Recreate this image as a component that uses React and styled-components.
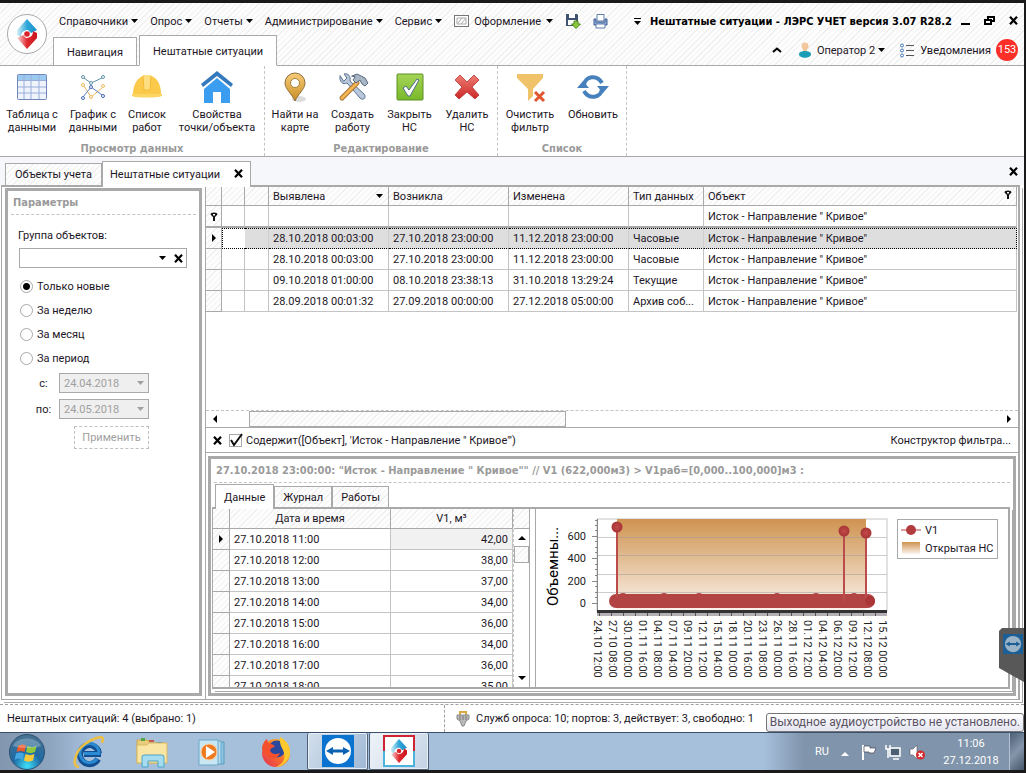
import React, { Fragment } from "react";
import styled, { createGlobalStyle, css } from "styled-components";

const GlobalStyle = createGlobalStyle`
  * {
    box-sizing: border-box;
  }
  body {
    margin: 0;
    font-family: Roboto, "Noto Sans", sans-serif;
    font-size: 11px;
    line-height: 13px;
    color: #1c1626;
    background: #1a1a1a;
  }
  button, input, select {
    font: inherit;
    color: inherit;
    margin: 0;
    padding: 0;
    border: 0;
    background: none;
  }
  ul {
    margin: 0;
    padding: 0;
    list-style: none;
  }
`;

const line = "#a9a9a9";
const boldFont = css`
  font-family: "DejaVu Sans Condensed", "Noto Sans", sans-serif;
  font-weight: bold;
`;
const hatch = css`
  background: repeating-linear-gradient(135deg, #fdfdfd 0 3px, #f0f0f0 3px 4px);
`;
const frameShadow = css`
  box-shadow: 2px 2px 0 #fff, 3px 3px 0 ${line};
`;

const Desktop = styled.div`
  position: relative;
  display: flex;
  flex-direction: column;
  height: 100vh;
  min-width: 960px;
  min-height: 700px;
  padding: 3px 2px 3px 0;
  background: #1a1a1a;
`;

/* шапка окна */
const Head = styled.header`
  ${hatch}
  display: flex;
  height: 63px;
  flex-shrink: 0;
  padding-left: 7px;
  border-bottom: 1px solid ${line};
`;

const AppButton = styled.button`
  display: flex;
  align-items: center;
  justify-content: center;
  width: 40px;
  height: 40px;
  margin-top: 11px;
  border: 1px solid ${line};
  border-radius: 50%;
  background: #fff;
  flex-shrink: 0;
`;

const HeadRows = styled.div`
  display: flex;
  flex: 1;
  flex-direction: column;
  justify-content: space-between;
  padding-left: 6px;
  min-width: 0;
`;

const HeadRow = styled.div`
  display: flex;
  justify-content: space-between;
  height: 30px;
  align-items: ${p => p.$end ? "flex-end" : "center"};
  padding-right: 6px;
`;

const Menu = styled.nav`
  display: flex;
  align-items: center;
  gap: 12px;
  padding: 6px 0 0 6px;
`;

const MenuItem = styled.button`
  display: flex;
  align-items: center;
  gap: ${p => p.$icon ? 5 : 3}px;
  white-space: nowrap;
`;

const WindowTitle = styled.div`
  ${boldFont}
  display: flex;
  align-items: center;
  gap: 9px;
  padding-top: 6px;
  color: #000;
  white-space: nowrap;
`;

const WindowButtons = styled.div`
  display: flex;
  align-items: center;
  gap: 14px;
`;

const RibbonTabs = styled.div`
  display: flex;
  align-items: flex-end;
  gap: 2px;
  margin-bottom: -1px;
`;

const RibbonTab = styled.button`
  height: ${p => p.$active ? 31 : 29}px;
  padding: 2px 13px 0;
  border: 1px solid ${line};
  border-bottom-color: ${p => p.$active ? "#fff" : line};
  background: #fff;
`;

const UserBar = styled.div`
  display: flex;
  align-items: center;
  align-self: center;
  gap: 14px;
`;

const Badge = styled.span`
  width: 22px;
  height: 22px;
  border-radius: 50%;
  background: #fb2f28;
  color: #fff;
  line-height: 22px;
  text-align: center;
`;

/* лента */
const RibbonBar = styled.div`
  display: flex;
  height: 91px;
  flex-shrink: 0;
  background: #fff;
  border-bottom: 1px solid ${line};
`;

const RibbonGroup = styled.section`
  display: flex;
  flex-direction: column;
  justify-content: space-between;
  padding: 5px 1px 1px;
  border-right: 1px dashed #c4c4c4;
`;

const RibbonItems = styled.div`
  display: flex;
`;

const GroupTitle = styled.div`
  ${boldFont}
  color: #9a9a9a;
  text-align: center;
`;

const RibbonButton = styled.button`
  display: flex;
  flex-direction: column;
  align-items: center;
  gap: 5px;
  width: ${p => p.$width}px;
  white-space: pre-line;
`;

/* вкладки документов */
const DocTabs = styled.div`
  display: flex;
  align-items: flex-end;
  height: 28px;
  flex-shrink: 0;
  padding: 0 6px 0 5px;
  background: #f6f7fa;
  .space {
    flex: 1;
  }
  .close-all {
    align-self: center;
    display: flex;
  }
`;

const DocTab = styled.div`
  ${p => p.$active ? "background: #fff;" : hatch}
  position: relative;
  z-index: ${p => p.$active ? 1 : 0};
  display: flex;
  align-items: center;
  gap: 14px;
  height: ${p => p.$active ? 26 : 22}px;
  margin-bottom: ${p => p.$active ? -2 : 0}px;
  padding: 0 ${p => p.$active ? 7 : 9}px;
  border: 1px solid ${line};
  border-bottom: 0;
  white-space: nowrap;
`;

const Frame = styled.main`
  ${frameShadow}
  display: flex;
  flex: 1;
  min-height: 0;
  margin: 0 4px 4px 1px;
  border: 1px solid ${line};
  border-top-width: 2px;
  border-right-width: 2px;
  background: #fff;
`;

const Backdrop = styled.div`
  display: flex;
  flex-direction: column;
  flex: 1;
  min-height: 0;
  background: #fff;
`;

/* параметры */
const SidePanel = styled.aside`
  width: 197px;
  flex-shrink: 0;
  margin: 1px 3px 3px;
  border: 3px solid ${line};
`;

const PanelTitle = styled.h2`
  ${boldFont}
  display: flex;
  align-items: center;
  height: ${p => p.$height}px;
  margin: 0 3px;
  padding: 0 2px;
  border-bottom: 1px dashed #c4c4c4;
  color: #9a9a9a;
  font-size: 11px;
  white-space: nowrap;
  overflow: hidden;
`;

const Params = styled.form`
  display: flex;
  flex-direction: column;
  padding: 14px 12px 0 10px;
`;

const Combo = styled.div`
  display: flex;
  align-items: center;
  gap: 8px;
  height: 20px;
  margin: 6px 0 6px 1px;
  padding-right: 3px;
  border: 1px solid ${line};
  select {
    flex: 1;
    appearance: none;
    align-self: stretch;
  }
  button {
    display: flex;
  }
`;

const Radio = styled.label`
  display: flex;
  align-items: center;
  gap: 4px;
  height: 24px;
  padding-left: 2px;
  input {
    width: 13px;
    height: 13px;
    appearance: none;
    border: 1px solid ${line};
    border-radius: 50%;
    background: #fff;
  }
  input:checked {
    background: radial-gradient(circle, #000 0 3px, #fff 4px);
  }
`;

const DateRow = styled.div`
  display: grid;
  grid-template-columns: 23px 90px;
  justify-content: start;
  align-items: center;
  gap: 4px;
  height: 26px;
  padding-left: 14px;
  label {
    justify-self: center;
  }
`;

const DateBox = styled.div`
  display: flex;
  align-items: center;
  height: 20px;
  padding: 0 4px;
  border: 1px solid ${line};
  background: #efefef;
  color: #a0a0a0;
  select {
    flex: 1;
    appearance: none;
    opacity: 1;
  }
`;

const ApplyButton = styled.button`
  align-self: flex-start;
  width: 75px;
  height: 23px;
  margin: 4px 0 0 56px;
  border: 1px dashed #c0c0c0;
  color: #a0a0a0;
`;

/* основная таблица */
const Workspace = styled.div`
  display: flex;
  flex: 1;
  flex-direction: column;
  min-width: 0;
  border-left: 1px solid ${line};
`;

const TableArea = styled.div`
  flex: 1;
  min-height: 0;
  padding-right: 1px;
  overflow: hidden;
`;

const Table = styled.table`
  width: 100%;
  table-layout: fixed;
  border-collapse: separate;
  border-spacing: 0;
  th, td {
    height: 21px;
    padding: 0 4px;
    border-right: 1px solid #c4c4c4;
    border-bottom: 1px solid #c4c4c4;
    font-weight: normal;
    text-align: left;
    white-space: nowrap;
    overflow: hidden;
    text-overflow: ellipsis;
  }
  thead th, tbody th {
    ${hatch}
    border-color: ${line};
  }
  tbody th, thead th:empty {
    padding: 0;
  }
  tbody th svg {
    display: block;
    margin: 0 auto;
  }
  thead th {
    height: ${p => p.$head}px;
    text-align: ${p => p.$center ? "center" : "left"};
  }
`;

const ValueCell = styled.td`
  && {
    background: ${p => p.$focused ? "#f1f1f1" : "#fff"};
    text-align: right;
  }
`;

const HeadCell = styled.div`
  display: flex;
  align-items: ${p => p.$top ? "flex-start" : "center"};
  justify-content: space-between;
`;

const FilterRow = styled.tr`
  th, td {
    height: 22px;
    border-bottom: 2px solid ${line};
  }
  input {
    display: block;
    width: 100%;
    outline: 0;
  }
`;

const DataRow = styled.tr`
  ${p => p.$selected && css`
    td {
      background: #dedede;
      border-top: 1px dotted #000;
      border-bottom: 1px dotted #000;
      border-right-color: #cfcfcf;
    }
    th + td {
      background: #fff;
      border-left: 1px dotted #000;
      border-right: 0;
    }
    td:last-child {
      border-right: 1px dotted #000;
    }
  `}
`;

const HScroll = styled.div`
  display: grid;
  grid-template-columns: 43px 317px 1fr;
  height: 18px;
  border-bottom: 1px solid ${line};
  border-top: 1px dashed #c4c4c4;
  align-items: center;
  svg {
    margin: 0 5px;
  }
  svg:last-child {
    justify-self: end;
  }
`;

const Thumb = styled.div`
  ${hatch}
  height: 16px;
  border: 1px solid ${line};
`;

const FilterBar = styled.div`
  display: flex;
  align-items: center;
  height: 25px;
  padding: 0 7px;
  border-bottom: 1px solid ${line};
  white-space: nowrap;
  & > button:first-child {
    display: flex;
    margin-right: 7px;
  }
  & > button:last-child {
    margin-left: auto;
  }
`;

const Check = styled.label`
  display: grid;
  grid-template-columns: 14px auto;
  align-items: center;
  gap: 3px;
  input, svg {
    grid-area: 1 / 1;
  }
  input {
    width: 13px;
    height: 13px;
    appearance: none;
    border: 1px solid ${line};
  }
  svg {
    pointer-events: none;
  }
`;

/* детализация */
const Details = styled.section`
  display: flex;
  flex-direction: column;
  height: 240px;
  flex-shrink: 0;
  margin: 3px 2px 3px 2px;
  border: 3px solid ${line};
`;

const DetailTabs = styled.div`
  display: flex;
  align-items: flex-end;
  height: 24px;
  padding-left: 4px;
`;

const DetailTab = styled.button`
  ${p => p.$active ? "background: #fff;" : hatch}
  position: relative;
  z-index: ${p => p.$active ? 1 : 0};
  height: ${p => p.$active ? 25 : 21}px;
  margin-bottom: ${p => p.$active ? -2 : 0}px;
  padding: 0 8px;
  border: 1px solid ${line};
  border-bottom: 0;
`;

const DetailPage = styled.div`
  ${frameShadow}
  display: flex;
  flex: 1;
  min-height: 0;
  margin: 0 3px 4px 1px;
  border: 2px solid ${line};
  border-left-width: 1px;
`;

const DataPane = styled.div`
  display: flex;
  width: 317px;
  flex-shrink: 0;
  overflow: hidden;
  border-right: 1px solid ${line};
`;

const DataScroll = styled.div`
  flex: 1;
  overflow: hidden;
`;

const VScroll = styled.div`
  display: flex;
  flex-direction: column;
  align-items: center;
  width: 16px;
  border-left: 1px dashed #c4c4c4;
  .corner {
    ${hatch}
    align-self: stretch;
    height: 20px;
    margin-bottom: 5px;
    border-bottom: 1px solid ${line};
  }
  .thumb {
    ${hatch}
    align-self: stretch;
    height: 17px;
    margin-top: 4px;
    border: 1px solid ${line};
  }
  svg:last-child {
    margin: auto 0 5px;
  }
`;

const ChartPane = styled.div`
  display: flex;
  flex: 1;
  align-items: flex-start;
  margin-left: 5px;
  border-left: 1px solid ${line};
  overflow: hidden;
`;

const Legend = styled.ul`
  width: 101px;
  margin-top: 10px;
  padding: 1px 3px;
  border: 1px solid ${line};
  li {
    display: flex;
    align-items: center;
    gap: 4px;
    height: 18px;
    white-space: nowrap;
  }
`;

/* строка состояния и панель задач */
const StatusBar = styled.footer`
  display: flex;
  height: 28px;
  flex-shrink: 0;
  background: #fff;
  border-top: 1px dashed #a0a0a0;
  white-space: nowrap;
`;

const StatusCell = styled.div`
  display: flex;
  align-items: center;
  gap: 6px;
  padding-left: ${p => p.$wide ? 7 : 11}px;
  width: ${p => p.$wide ? "445px" : "auto"};
  border-right: ${p => p.$wide ? "1px dashed #a0a0a0" : "0"};
`;

const Taskbar = styled.div`
  display: flex;
  height: 38px;
  flex-shrink: 0;
  border-top: 1px solid #3a4f6b;
  background: linear-gradient(90deg, #8296ae 0, #8ea5bf 50px, #a6bfdb 90px, #a6bfdb calc(100% - 260px), #8094ab calc(100% - 220px), #8094ab 100%);
`;

const TaskButton = styled.button`
  display: flex;
  align-items: center;
  justify-content: center;
  width: ${p => p.$width}px;
  ${p => p.$open && css`
    border: 1px solid #4c6078;
    border-top: 0;
    border-radius: 2px;
    margin-right: 1px;
    box-shadow: inset 0 0 0 1px #e7eef6;
    background: linear-gradient(120deg, ${p.$current ? "#f0f4f9, #c3d2e4" : "#d3dfec, #9fb8d5"});
  `}
`;

const Tray = styled.div`
  display: flex;
  align-items: center;
  gap: 8px;
  margin-left: auto;
  color: #fff;
  & > button, & > div {
    display: flex;
    align-items: center;
  }
`;

const Clock = styled.div`
  width: 76px;
  line-height: 17px;
  text-align: center;
`;

const ShowDesktop = styled.button`
  width: 15px;
  height: 37px;
  border-left: 1px solid #b4c1d0;
  background: linear-gradient(135deg, #4d5f75, #8496ab 50%, #46566a);
`;

const Hint = styled.div`
  position: absolute;
  right: 2px;
  bottom: 41px;
  height: 19px;
  padding: 0 3px;
  border: 1px solid #767676;
  border-radius: 3px;
  background: linear-gradient(#fff, #e4e5f0);
  color: #5b5364;
  font-size: 12px;
  line-height: 17px;
  white-space: nowrap;
`;

const SideTab = styled.button`
  position: absolute;
  right: 2px;
  bottom: 91px;
  display: flex;
`;

const Caret = ({ color = "#000", size = 7 }) => (
  <svg width={size} height="4" viewBox="0 0 7 4"><path d="M0 0h7L3.500 4z" fill={color} /></svg>
);

const Arrow = ({ dir }) => (
  <svg width="8" height="8" viewBox="0 0 8 8">
    <path d="M2 0v8l4-4z" transform={`rotate(${dir} 4 4)`} fill="#000" />
  </svg>
);

const Cross = () => (
  <svg width="9" height="9" viewBox="0 0 9 9">
    <path d="M1 .8 8 8.200M8 .8 1 8.200" stroke="#000" strokeWidth="2.200" />
  </svg>
);

const Pin = () => (
  <svg width="8" height="9" viewBox="0 0 8 9">
    <path d="M.5 2.500a3.500 2 0 0 1 7 0L5 5v4H3V5z" fill="#111" />
    <path d="M3 2h2v1.500H3z" fill="#fff" />
  </svg>
);

const Logo = ({ size, framed }) => (
  <svg width={size} height={size} viewBox="0 0 32 32">
    <defs>
      <linearGradient id="logoBlue" x1="1" x2="0"><stop offset="0" stopColor="#1b8fc9" /><stop offset=".5" stopColor="#2fa6d8" /><stop offset="1" stopColor="#d8f0f8" /></linearGradient>
      <linearGradient id="logoRed" x1="0" x2="1"><stop offset="0" stopColor="#fbdede" /><stop offset=".5" stopColor="#e02a30" /><stop offset="1" stopColor="#c8161e" /></linearGradient>
    </defs>
    {framed && (
      <Fragment>
        <path d="M1 16V1h30v15" fill="#fff" stroke="#cf2334" strokeWidth="2" />
        <path d="M1 16v15h30V16" fill="#fff" stroke="#4bb4dd" strokeWidth="2" />
      </Fragment>
    )}
    <g transform={framed ? "translate(3.200 3.200) scale(.8)" : undefined}>
      <path d="M16 1 6 12v5l4 2c0-5 3-7 7-7l3 3 6-3z" fill="url(#logoBlue)" />
      <path d="m16 31 10-11v-5l-4-2c0 5-3 7-7 7l-3-3-6 3z" fill="url(#logoRed)" />
      <circle cx="16" cy="16" r="2.800" fill="#d8232b" />
    </g>
  </svg>
);

const SwapMark = ({ size, dim }) => (
  <svg width={size} height={size} viewBox="0 0 32 32">
    <rect width="32" height="32" fill={dim ? "#1c5f96" : "#0a72cf"} />
    <circle cx="16" cy="16" r="13" fill={dim ? "#9ab3c6" : "#fff"} />
    <path d="m4 16 7-4v2.500h10V12l7 4-7 4v-2.500H11V20z" fill={dim ? "#1c5f96" : "#0a62b4"} />
  </svg>
);

const ribbonIcons = {
  table: (
    <g>
      <rect x="1.500" y="3.500" width="29" height="25" rx="1" fill="#eef3fc" stroke="#6f86b8" />
      <path d="M2 4h28v5H2z" fill="#9cc9ef" />
      <path d="M2 9.500h28M2 16h28M2 22h28M8 4v24M15 4v24M23 4v24" stroke="#9aaedb" />
    </g>
  ),
  graph: (
    <g fill="none">
      <path d="m7 7 7 5 11-5" stroke="#5f93a8" />
      <path d="m7 15 7 11 11-9" stroke="#edb95c" />
      <path d="m6 26 8-10 11 8" stroke="#5a7fc0" />
      <g fill="#fff"><circle cx="6" cy="6" r="1.500" stroke="#5f93a8" /><circle cx="14" cy="12" r="1.500" stroke="#5f93a8" /><circle cx="26" cy="6" r="1.500" stroke="#5f93a8" />
        <circle cx="6" cy="14" r="1.500" stroke="#edb95c" /><circle cx="14" cy="26" r="1.500" stroke="#edb95c" /><circle cx="26" cy="15" r="1.500" stroke="#edb95c" />
        <circle cx="6" cy="27" r="1.500" stroke="#4468ae" /><circle cx="14" cy="16" r="1.500" stroke="#4468ae" /><circle cx="26" cy="25" r="1.500" stroke="#4468ae" /></g>
    </g>
  ),
  helmet: (
    <g>
      <path d="M2 23C2 12 8 6 12 5h8c5 1 10 7 10 18z" fill="#fcca4a" />
      <path d="M12 4h8l-1 15h-6z" fill="#fddf82" />
      <path d="M12 5l1 14h6l1-14" fill="none" stroke="#f3bb33" />
      <path d="M1 23h30v2c-3 2-27 2-30 0z" fill="#fdd562" />
    </g>
  ),
  house: (
    <g>
      <path d="m16 0 16 13-2 3L16 5 2 16l-2-3z" fill="#3579bd" />
      <path d="M16 7 29 18v14h-9V21h-8v11H3V18z" fill="#3b9df0" />
    </g>
  ),
  place: (
    <g>
      <ellipse cx="20" cy="28" rx="7" ry="3" fill="#bbb" opacity=".5" />
      <path d="M16 30C13 23 6 18 6 12a10 10 0 0 1 20 0c0 6-7 11-10 18z" fill="url(#gold)" stroke="#8f6c38" />
      <circle cx="16" cy="12" r="4.500" fill="#fff" stroke="#a7803d" />
    </g>
  ),
  tools: (
    <g strokeLinecap="round">
      <path d="M3 5c-1 6 3 9 7 7l13 15c3 3 7 0 4-4L13 10c1-5-2-8-6-7l3 4-3 3z" fill="#b8c7d9" stroke="#5c7390" />
      <path d="m20 12-15 15" stroke="#a8742e" strokeWidth="5" />
      <path d="m20 12-15 15" stroke="#f3b456" strokeWidth="3" />
      <path d="m15 5 5-2 8 4 3 5-3 3-3-2-2-4-4 3-3-3 2-3z" fill="#a9b6c6" stroke="#56677e" />
    </g>
  ),
  done: (
    <g>
      <rect x="3" y="3" width="26" height="26" rx="1" fill="url(#green)" stroke="#5b9122" />
      <path d="m9 17 3-2 3 4 8-11 2 1-9 16h-2z" fill="#fff" stroke="#4a6e83" />
    </g>
  ),
  remove: (
    <path d="m4 9 5-5 7 7 7-7 5 5-7 7 7 8-4 4-8-7-8 7-4-4 7-8z" fill="url(#red)" stroke="#b63330" strokeWidth=".8" />
  ),
  funnel: (
    <g>
      <path d="M3 3h26v4L19 18v7l-5 5V18L3 7z" fill="#f0c26a" />
      <path d="m21 21 9 9M30 21l-9 9" stroke="#e0572f" strokeWidth="3" />
    </g>
  ),
  refresh: (
    <g fill="none" stroke="#4680bd" strokeWidth="4">
      <path d="M7 14c1-9 13-11 18-2" />
      <path d="M25 18c-1 9-13 11-18 2" />
      <path d="M20 15h12l-6 7z" fill="#4680bd" stroke="none" />
      <path d="M0 17h12l-6-7z" fill="#4680bd" stroke="none" />
    </g>
  ),
};

const RibbonIcon = ({ name }) => (
  <svg width="32" height="32" viewBox="0 0 32 32">
    <defs>
      <linearGradient id="gold" x2="0" y2="1"><stop stopColor="#f7cd78" /><stop offset="1" stopColor="#c98c25" /></linearGradient>
      <linearGradient id="green" x2="0" y2="1"><stop stopColor="#a6d457" /><stop offset="1" stopColor="#78b82a" /></linearGradient>
      <linearGradient id="red" x2="0" y2="1"><stop stopColor="#ee7d74" /><stop offset="1" stopColor="#cb2626" /></linearGradient>
    </defs>
    {ribbonIcons[name]}
  </svg>
);

const taskIcons = {
  start: (
    <g>
      <circle cx="18" cy="18" r="17.500" fill="url(#orb)" stroke="#2c4f73" />
      <path d="M9 12c3-2 6-2 8-.5L15.500 18c-3-1.500-5-1.500-8 0z" fill="#ea5a2c" />
      <path d="M18.500 12c3 1.500 6 1.500 9 0L26 18c-3 1.500-6 1.500-9 0z" fill="#8fc73e" />
      <path d="M7 19.500c3-1.500 5-1.500 8 0L13.500 26c-3-2-5-2-8 0z" fill="#46a6e4" />
      <path d="M16.500 20c3 1.500 6 1.500 9 0L24 26.500c-3 1.500-6 1.500-9 0z" fill="#fbc83a" />
      <path d="M4 12C8 2 28 2 32 12c-8 3-20 3-28 0z" fill="#fff" opacity=".25" />
    </g>
  ),
  browser: (
    <g fill="none">
      <path d="M30 20H13M28 19.500A9.500 9.500 0 1 0 27 25" stroke="#124f92" strokeWidth="6" />
      <path d="M29 19.500H13M28 19.500A9.500 9.500 0 1 0 26 25" stroke="#2a8ad2" strokeWidth="3" />
      <path d="M8 33C0 33 4 17 14 10 22 4 32 1 32 5l-1 4" stroke="#edbf45" strokeWidth="2.500" />
    </g>
  ),
  folder: (
    <g>
      <path d="M3 6h11l2 3h16v20H3z" fill="#e9cd7a" stroke="#cda94f" />
      <path d="M7 4h4v3H7z" fill="#52a447" /><path d="M15 6h5v2h-5z" fill="#c85948" /><path d="M23 8h5v2h-5z" fill="#3e8fcb" />
      <path d="M3 11h10l2-2h18v20H3z" fill="#f9e6a4" stroke="#d8b965" />
      <path d="M8 33V23q0-2 2-2h18q2 0 2 2v10h-6v-6H14v6z" fill="#a6dcf0" stroke="#4aa3c7" />
    </g>
  ),
  player: (
    <g>
      <path d="M14 8h16v22H14z" fill="#8ec4e0" stroke="#599dc0" /><path d="M9 7h18v23H9z" fill="#b6dced" stroke="#69a8c8" />
      <path d="M5 6h19v25H5z" fill="#c9e6f3" stroke="#69a8c8" />
      <circle cx="15" cy="18" r="8" fill="#ee7b22" stroke="#fbd0a4" /><path d="m12 12 9 6-9 6z" fill="#fff" />
    </g>
  ),
  fox: (
    <g>
      <circle cx="18" cy="19" r="14" fill="url(#fire)" />
      <circle cx="19" cy="15" r="8.500" fill="#27489d" />
      <path d="M22 3c8 4 12 12 9 20-3 7-8 10-13 10 8-4 9-8 8-14-1-5-5-7-4-16z" fill="#fdc82e" />
      <path d="M4 13c1-4 3-7 5-8l1 4c3 0 5 2 7 3-2 2-4 2-5 4 1 4 5 5 10 3-2 6-9 7-13 2-3-2-5-5-5-8z" fill="#f4502d" />
    </g>
  ),
};

const TaskIcon = ({ name }) => (
  <svg width="36" height="36" viewBox="0 0 36 36">
    <defs>
      <radialGradient id="orb" cy=".9" r=".9"><stop stopColor="#3fe0fb" /><stop offset=".45" stopColor="#1d6aa3" /><stop offset="1" stopColor="#4a7390" /></radialGradient>
      <linearGradient id="fire" x1="1" x2="0" y2="1"><stop stopColor="#fdd631" /><stop offset=".5" stopColor="#f8702a" /><stop offset="1" stopColor="#e32b5b" /></linearGradient>
    </defs>
    {taskIcons[name]}
  </svg>
);

const menu = ["Справочники", "Опрос", "Отчеты", "Администрирование", "Сервис"];

const ribbon = [
  {
    title: "Просмотр данных",
    items: [
      ["table", "Таблица с\nданными", 62],
      ["graph", "График с\nданными", 60],
      ["helmet", "Список\nработ", 48],
      ["house", "Свойства\nточки/объекта", 92],
    ],
  },
  {
    title: "Редактирование",
    items: [
      ["place", "Найти на\nкарте", 58],
      ["tools", "Создать\nработу", 57],
      ["done", "Закрыть\nНС", 57],
      ["remove", "Удалить\nНС", 58],
    ],
  },
  {
    title: "Список",
    items: [
      ["funnel", "Очистить\nфильтр", 62],
      ["refresh", "Обновить", 64],
    ],
  },
];

const place = "Исток - Направление \" Кривое\"";

const events = [
  ["28.10.2018 00:03:00", "27.10.2018 23:00:00", "11.12.2018 23:00:00", "Часовые"],
  ["28.10.2018 00:03:00", "27.10.2018 23:00:00", "11.12.2018 23:00:00", "Часовые"],
  ["09.10.2018 01:00:00", "08.10.2018 23:38:13", "31.10.2018 13:29:24", "Текущие"],
  ["28.09.2018 00:01:32", "27.09.2018 00:00:00", "27.12.2018 05:00:00", "Архив соб..."],
];

const hours = [
  ["27.10.2018 11:00", "42,00"],
  ["27.10.2018 12:00", "38,00"],
  ["27.10.2018 13:00", "37,00"],
  ["27.10.2018 14:00", "34,00"],
  ["27.10.2018 15:00", "36,00"],
  ["27.10.2018 16:00", "34,00"],
  ["27.10.2018 17:00", "36,00"],
  ["27.10.2018 18:00", "35,00"],
];

const ticks = [
  "24.10 12:00", "27.10 08:00", "30.10 00:00", "01.11 16:00", "04.11 08:00",
  "07.11 04:00", "09.11 20:00", "12.11 12:00", "15.11 04:00", "18.11 00:00",
  "20.11 16:00", "23.11 08:00", "26.11 00:00", "28.11 16:00", "01.12 12:00",
  "04.12 04:00", "06.12 20:00", "09.12 12:00", "12.12 08:00", "15.12 00:00",
];

const peaks = [[81, 18], [308, 22], [330, 24]];
const bumps = [87, 128, 163, 241, 280, 318];

const Chart = () => (
  <svg width="361" height="176" viewBox="0 0 361 176" fontSize="11" fill="#222">
    <defs>
      <linearGradient id="open" x2="0" y2="1"><stop stopColor="#cf9350" /><stop offset="1" stopColor="#fbf4ee" /></linearGradient>
      <radialGradient id="ball"><stop stopColor="#c04a48" /><stop offset="1" stopColor="#a93436" /></radialGradient>
    </defs>
    <rect x="61" y="10" width="290" height="92" fill="#fff" stroke="#c4c4c4" />
    <rect x="81" y="10" width="249" height="92" fill="url(#open)" />
    <path d="M62 28.500h289M62 46.500h289M62 65.500h289M62 83.500h289" stroke="#999" strokeOpacity=".5" />
    <path d="M61.500 10v92" stroke="#888" />
    {[27, 49, 72, 94].map((y, i) => (
      <g key={y}>
        <path d={`M56 ${y}.5h5`} stroke="#888" />
        <text x="50" y={y + 4} textAnchor="end">{600 - i * 200}</text>
      </g>
    ))}
    {[11, 16, 21, 32, 38, 43, 55, 60, 66, 77, 83, 88].map(y => (
      <path key={y} d={`M59 ${y}.5h2`} stroke="#888" />
    ))}
    <rect x="73" y="85" width="266" height="14" rx="7" fill="#b34444" />
    {bumps.map(x => <circle key={x} cx={x} cy="89" r="5" fill="#b34444" />)}
    {peaks.map(([x, y]) => (
      <g key={x}>
        <path d={`M${x} ${y}v70`} stroke="#bc4b4b" strokeWidth="2" />
        <circle cx={x} cy={y} r="5.500" fill="url(#ball)" />
      </g>
    ))}
    <circle cx="334" cy="92" r="5" fill="#aa3638" />
    <path d="M61 102.500h290" stroke="#333" strokeWidth="3" />
    <path d="M61 105.500h290" stroke="#b5b0b5" strokeWidth="3" />
    <path d="M63 105.500h288" stroke="#555" strokeWidth="3" strokeDasharray="1 11" />
    {ticks.map((t, i) => (
      <text key={t} transform={`translate(${58 + i * 15} 111) rotate(90)`}>{t}</text>
    ))}
    <text transform="translate(22 97) rotate(-90)" fontSize="15" fill="#000">Объемны...</text>
  </svg>
);

class App extends React.Component {
  state = {
    period: "Только новые",
    filterOn: true,
    filter: place,
  };

  handleChange = (type, e) => {
    this.setState({
      [type]: e,
    });
  };

  renderHead() {
    return (
      <Head>
        <AppButton aria-label="Главное меню"><Logo size={32} /></AppButton>
        <HeadRows>
          <HeadRow>
            <Menu>
              {menu.map(m => <MenuItem key={m}>{m}<Caret /></MenuItem>)}
              <MenuItem $icon>
                <svg width="15" height="12" viewBox="0 0 15 12">
                  <rect x=".5" y=".5" width="14" height="11" fill="#fff" stroke="#777" />
                  <path d="M3 3h9v6H3zM4 8l4-5M7 9l5-6" fill="none" stroke="#aaa" />
                </svg>
                Оформление<Caret />
              </MenuItem>
              <MenuItem aria-label="Сохранить">
                <svg width="16" height="16" viewBox="0 0 16 16">
                  <path d="M1 1h11l1 1v11H1z" fill="#3f526f" />
                  <path d="M4 1h6v4H4zM3 7h8v5H3z" fill="#fff" />
                  <path d="M9 8h4v3h2.500L11 15.500 6.500 11H9z" fill="#8cc63a" stroke="#4c8a1c" />
                </svg>
              </MenuItem>
              <MenuItem aria-label="Печать">
                <svg width="15" height="15" viewBox="0 0 15 15">
                  <path d="M4 .5h7V7H4z" fill="#fff" stroke="#5e7cab" />
                  <path d="M1 5h2v3h9V5h2v6H1z" fill="#8aa7d2" stroke="#3f5f95" />
                  <path d="M3 10h9v4H3z" fill="#fff" stroke="#5e7cab" />
                </svg>
              </MenuItem>
            </Menu>
            <WindowTitle>
              <svg width="7" height="7" viewBox="0 0 7 7"><path d="M0 0h7v1H0zM0 3h7L3.500 7z" /></svg>
              <span>Нештатные ситуации - ЛЭРС УЧЕТ версия 3.07 R28.2</span>
              <WindowButtons>
                <button aria-label="Свернуть"><svg width="9" height="9" viewBox="0 0 9 9"><path d="M0 7h9v2H0z" /></svg></button>
                <button aria-label="Восстановить">
                  <svg width="11" height="9" viewBox="0 0 11 9"><path d="M4 5V1h6v4H7M1 4h6v4H1z" fill="none" stroke="#000" strokeWidth="2" /></svg>
                </button>
                <button aria-label="Закрыть"><Cross /></button>
              </WindowButtons>
            </WindowTitle>
          </HeadRow>
          <HeadRow $end>
            <RibbonTabs>
              <RibbonTab>Навигация</RibbonTab>
              <RibbonTab $active>Нештатные ситуации</RibbonTab>
            </RibbonTabs>
            <UserBar>
              <MenuItem aria-label="Свернуть ленту">
                <svg width="10" height="6" viewBox="0 0 10 6"><path d="m1 5 4-3.500L9 5" fill="none" stroke="#000" strokeWidth="2" /></svg>
              </MenuItem>
              <MenuItem>
                <svg width="18" height="18" viewBox="0 0 18 18">
                  <path d="M3 13c0-4 12-4 12 0 0 5-12 5-12 0z" fill="#1a9db5" />
                  <circle cx="9" cy="5" r="3.500" fill="#f2c79c" /><path d="M7 7h4v3H7z" fill="#f2c79c" />
                </svg>
                Оператор 2<Caret />
              </MenuItem>
              <MenuItem $icon>
                <svg width="16" height="15" viewBox="0 0 16 15">
                  <g fill="#fff" stroke="#3f77b8"><circle cx="3" cy="2.500" r="1.500" /><circle cx="3" cy="7.500" r="1.500" /><circle cx="3" cy="12.500" r="1.500" /></g>
                  <path d="M7 2.500h8M7 7.500h8M7 12.500h8" stroke="#555" />
                </svg>
                Уведомления<Badge>153</Badge>
              </MenuItem>
            </UserBar>
          </HeadRow>
        </HeadRows>
      </Head>
    );
  }

  renderParams() {
    const { period } = this.state;
    return (
      <SidePanel>
        <PanelTitle $height={24}>Параметры</PanelTitle>
        <Params>
          <label htmlFor="group">Группа объектов:</label>
          <Combo>
            <select id="group"><option value="" /></select>
            <Caret />
            <button type="button" aria-label="Очистить"><Cross /></button>
          </Combo>
          {["Только новые", "За неделю", "За месяц", "За период"].map(p => (
            <Radio key={p}>
              <input
                type="radio"
                name="period"
                checked={period === p}
                onChange={this.handleChange.bind(null, "period", p)}
              />
              {p}
            </Radio>
          ))}
          {[["с:", "24.04.2018", "from"], ["по:", "24.05.2018", "to"]].map(([label, value, id]) => (
            <DateRow key={id}>
              <label htmlFor={id}>{label}</label>
              <DateBox>
                <select id={id} disabled><option>{value}</option></select>
                <Caret color="#a0a0a0" />
              </DateBox>
            </DateRow>
          ))}
          <ApplyButton type="button" disabled>Применить</ApplyButton>
        </Params>
      </SidePanel>
    );
  }

  renderEvents() {
    const { filter, filterOn } = this.state;
    return (
      <Fragment>
        <TableArea>
          <Table $head={19}>
            <colgroup>
              <col width="16" /><col width="23" /><col width="24" />
              <col width="120" /><col width="120" /><col width="120" /><col width="75" /><col />
            </colgroup>
            <thead>
              <tr>
                <th /><th /><th />
                <th><HeadCell>Выявлена<Caret size={9} /></HeadCell></th>
                <th>Возникла</th>
                <th>Изменена</th>
                <th>Тип данных</th>
                <th><HeadCell $top>Объект<Pin /></HeadCell></th>
              </tr>
            </thead>
            <tbody>
              <FilterRow>
                <th><Pin /></th>
                <td /><td /><td /><td /><td /><td />
                <td>
                  <input
                    aria-label="Фильтр по объекту"
                    value={filter}
                    onChange={e => this.handleChange("filter", e.target.value)}
                  />
                </td>
              </FilterRow>
              {events.map((row, i) => (
                <DataRow key={i} $selected={i === 0}>
                  <th>{i === 0 && <Arrow dir={0} />}</th>
                  <td /><td />
                  {row.map((cell, j) => <td key={j}>{cell}</td>)}
                  <td>{place}</td>
                </DataRow>
              ))}
            </tbody>
          </Table>
        </TableArea>
        <HScroll><Arrow dir={180} /><Thumb /><Arrow dir={0} /></HScroll>
        <FilterBar>
          <button aria-label="Сбросить фильтр"><Cross /></button>
          <Check>
            <input
              type="checkbox"
              checked={filterOn}
              onChange={e => this.handleChange("filterOn", e.target.checked)}
            />
            {filterOn && (
              <svg width="14" height="14" viewBox="0 0 14 14"><path d="m2 7 3 5 8-11" fill="none" stroke="#111" strokeWidth="2" /></svg>
            )}
            <span>Содержит([Объект], 'Исток - Направление " Кривое"')</span>
          </Check>
          <button>Конструктор фильтра...</button>
        </FilterBar>
      </Fragment>
    );
  }

  renderDetails() {
    return (
      <Details>
        <PanelTitle $height={24}>
          27.10.2018 23:00:00: "Исток - Направление " Кривое"" // V1 (622,000м3) &gt; V1раб=[0,000..100,000]м3 :
        </PanelTitle>
        <DetailTabs>
          <DetailTab $active>Данные</DetailTab>
          <DetailTab>Журнал</DetailTab>
          <DetailTab>Работы</DetailTab>
        </DetailTabs>
        <DetailPage>
          <DataPane>
            <DataScroll>
              <Table $head={20} $center>
                <colgroup><col width="17" /><col width="161" /><col /></colgroup>
                <thead>
                  <tr><th /><th>Дата и время</th><th>V1, м³</th></tr>
                </thead>
                <tbody>
                  {hours.map(([time, value], i) => (
                    <tr key={time}>
                      <th>{i === 0 && <Arrow dir={0} />}</th>
                      <td>{time}</td>
                      <ValueCell $focused={i === 0}>{value}</ValueCell>
                    </tr>
                  ))}
                </tbody>
              </Table>
            </DataScroll>
            <VScroll>
              <div className="corner" />
              <Arrow dir={-90} />
              <div className="thumb" />
              <Arrow dir={90} />
            </VScroll>
          </DataPane>
          <ChartPane>
            <Chart />
            <Legend>
              <li>
                <svg width="20" height="12" viewBox="0 0 20 12"><path d="M0 6h20" stroke="#b34444" /><circle cx="10" cy="6" r="5" fill="#b03c3e" /></svg>
                V1
              </li>
              <li>
                <svg width="20" height="12" viewBox="0 0 20 12"><rect x="1" width="18" height="12" fill="url(#open)" /></svg>
                Открытая НС
              </li>
            </Legend>
          </ChartPane>
        </DetailPage>
      </Details>
    );
  }

  renderTaskbar() {
    return (
      <Taskbar>
        <TaskButton $width={54} aria-label="Пуск"><TaskIcon name="start" /></TaskButton>
        <TaskButton $width={70} aria-label="Браузер"><TaskIcon name="browser" /></TaskButton>
        <TaskButton $width={56} aria-label="Проводник"><TaskIcon name="folder" /></TaskButton>
        <TaskButton $width={64} aria-label="Проигрыватель"><TaskIcon name="player" /></TaskButton>
        <TaskButton $width={63} aria-label="Firefox"><TaskIcon name="fox" /></TaskButton>
        <TaskButton $width={61} $open aria-label="TeamViewer"><SwapMark size={32} /></TaskButton>
        <TaskButton $width={60} $open $current aria-label="ЛЭРС УЧЕТ"><Logo size={32} framed /></TaskButton>
        <Tray>
          <span>RU</span>
          <button aria-label="Скрытые значки">
            <svg width="16" height="16" viewBox="0 0 16 16"><path d="m4 12 4-4 4 4z" fill="#fff" /></svg>
          </button>
          <button aria-label="Центр поддержки">
            <svg width="16" height="16" viewBox="0 0 16 16"><path d="M2 1v15" stroke="#fff" strokeWidth="2" /><path d="M3 2h6v2h6l-2 5H8V8H3z" fill="#fff" stroke="#445" strokeWidth=".7" /></svg>
          </button>
          <button aria-label="Сеть">
            <svg width="16" height="16" viewBox="0 0 16 16"><path d="M5 4h10v8H5zM8 15h6M1 1v4h4V1M3 5v9" fill="none" stroke="#fff" strokeWidth="1.500" /><path d="M6 5h8v6H6z" fill="#4e6072" /></svg>
          </button>
          <button aria-label="Громкость">
            <svg width="16" height="16" viewBox="0 0 16 16"><path d="M1 5h3l4-4v14l-4-4H1z" fill="#fff" stroke="#556" strokeWidth=".6" /><circle cx="11.500" cy="11" r="4.500" fill="#d4282c" /><path d="m9.500 9 4 4M13.500 9l-4 4" stroke="#fff" strokeWidth="1.500" /></svg>
          </button>
          <div>
            <Clock>11:06<br />27.12.2018</Clock>
            <ShowDesktop aria-label="Свернуть все окна" />
          </div>
        </Tray>
      </Taskbar>
    );
  }

  render() {
    return (
      <Fragment>
        <GlobalStyle />
        <Desktop>
          {this.renderHead()}
          <RibbonBar>
            {ribbon.map(group => (
              <RibbonGroup key={group.title}>
                <RibbonItems>
                  {group.items.map(([icon, text, width]) => (
                    <RibbonButton key={icon} $width={width}><RibbonIcon name={icon} />{text}</RibbonButton>
                  ))}
                </RibbonItems>
                <GroupTitle>{group.title}</GroupTitle>
              </RibbonGroup>
            ))}
          </RibbonBar>
          <DocTabs>
            <DocTab><button>Объекты учета</button></DocTab>
            <DocTab $active>
              <button>Нештатные ситуации</button>
              <button aria-label="Закрыть вкладку"><Cross /></button>
            </DocTab>
            <div className="space" />
            <button className="close-all" aria-label="Закрыть"><Cross /></button>
          </DocTabs>
          <Backdrop>
            <Frame>
              {this.renderParams()}
              <Workspace>
                {this.renderEvents()}
                {this.renderDetails()}
              </Workspace>
            </Frame>
          </Backdrop>
          <StatusBar>
            <StatusCell $wide>Нештатных ситуаций: 4 (выбрано: 1)</StatusCell>
            <StatusCell>
              <svg width="14" height="16" viewBox="0 0 14 16">
                <path d="M4 4V1h6v3" fill="none" stroke="#d8a843" strokeWidth="2" />
                <path d="M1 4h12v4l-3 2-2 5H6l-2-5-3-2z" fill="#b9b9b9" stroke="#8a8a8a" />
                <path d="M4 5v4M7 5v4M10 5v4" stroke="#777" />
              </svg>
              Служб опроса: 10; портов: 3, действует: 3, свободно: 1
            </StatusCell>
          </StatusBar>
          {this.renderTaskbar()}
          <Hint role="tooltip">Выходное аудиоустройство не установлено.</Hint>
          <SideTab aria-label="Панель TeamViewer">
            <svg width="25" height="54" viewBox="0 0 25 54">
              <path d="M3 0h22v54L0 40V3z" fill="#585858" />
              <g transform="translate(4 6)"><SwapMark size={20} dim /></g>
            </svg>
          </SideTab>
        </Desktop>
      </Fragment>
    );
  }
}

export default App;
